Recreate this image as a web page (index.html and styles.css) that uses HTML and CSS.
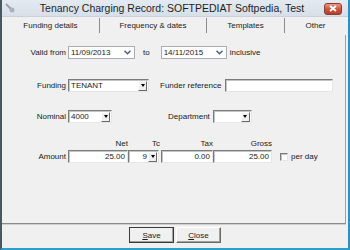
FILE: index.html
```html
<!DOCTYPE html>
<html lang="en">
<head>
    <meta charset="UTF-8">
    <title>Tenancy Charging Record</title>
    <link rel="stylesheet" href="styles.css">
</head>
<body>
    <div class="window">
        <div class="titlebar">
            <span class="app-icon">
                <svg width="10" height="10" viewBox="0 0 10 10"><path d="M1 1 L6 6" stroke="#9aa3ad" stroke-width="2"/><circle cx="7" cy="7" r="2.5" fill="#a9b1ba"/></svg>
            </span>
            <span class="title">Tenancy Charging Record: SOFTPEDIAT Softpedia, Test</span>
            <span class="close-btn">
                <svg width="8" height="7" viewBox="0 0 8 7"><path d="M1 1 L7 6 M7 1 L1 6" stroke="#fff" stroke-width="1.8"/></svg>
            </span>
        </div>

        <div class="tabs">
            <div class="tab active">Funding details</div>
            <div class="tab tab-freq">Frequency &amp; dates</div>
            <div class="tab tab-tpl">Templates</div>
            <div class="tab tab-other">Other</div>
        </div>

        <div class="panel">
            <div class="row row-valid">
                <span class="lbl">Valid from</span>
                <div class="date">
                    <span class="date-text">11/09/2013</span>
                    <svg class="chev" width="7" height="5" viewBox="0 0 7 5"><path d="M0.5 0.8 L3.5 3.8 L6.5 0.8" fill="none" stroke="#4a5f86" stroke-width="1.5"/></svg>
                </div>
                <span class="to">to</span>
                <div class="date date-to">
                    <span class="date-text">14/11/2015</span>
                    <svg class="chev" width="7" height="5" viewBox="0 0 7 5"><path d="M0.5 0.8 L3.5 3.8 L6.5 0.8" fill="none" stroke="#4a5f86" stroke-width="1.5"/></svg>
                </div>
                <span class="inclusive">inclusive</span>
            </div>

            <div class="row row-funding">
                <span class="lbl">Funding</span>
                <div class="combo combo-funding">
                    <span class="combo-text">TENANT</span>
                    <span class="combo-arrow"><i></i></span>
                </div>
                <span class="lbl-inline lbl-funder">Funder reference</span>
                <div class="field field-funder"></div>
            </div>

            <div class="row row-nominal">
                <span class="lbl">Nominal</span>
                <div class="combo combo-nominal">
                    <span class="combo-text">4000</span>
                    <span class="combo-arrow"><i></i></span>
                </div>
                <span class="lbl-inline lbl-dept">Department</span>
                <div class="combo combo-dept">
                    <span class="combo-text"></span>
                    <span class="combo-arrow"><i></i></span>
                </div>
            </div>

            <div class="row row-heads">
                <span class="lbl"></span>
                <span class="head col-net">Net</span>
                <span class="head col-tc">Tc</span>
                <span class="head col-gap"></span>
                <span class="head col-tax">Tax</span>
                <span class="head col-gross">Gross</span>
            </div>

            <div class="row row-amount">
                <span class="lbl">Amount</span>
                <div class="field num col-net">25.00</div>
                <div class="combo col-tc">
                    <span class="combo-text num">9</span>
                    <span class="combo-arrow"><i></i></span>
                </div>
                <span class="col-gap"></span>
                <div class="field num col-tax">0.00</div>
                <div class="field num col-gross">25.00</div>
                <span class="checkbox"></span>
                <span class="per-day">per day</span>
            </div>
        </div>

        <div class="buttons">
            <button class="btn btn-default"><u>S</u>ave</button>
            <button class="btn"><u>C</u>lose</button>
        </div>
    </div>
</body>
</html>
```

FILE: styles.css
```css
body {
    margin: 0;
    font-family: 'Liberation Sans', Arial, sans-serif;
    font-size: 8px;
    color: #1a1a1a;
    background: #f0f0f0;
}

.window {
    width: 350px;
    height: 250px;
    box-sizing: border-box;
    border-left: 2px solid #4c565f;
    border-right: 2px solid #2a93bd;
    border-bottom: 2px solid #2a9fc9;
    background: #f0f0f0;
    display: flex;
    flex-direction: column;
}

/* title bar */
.titlebar {
    height: 17px;
    display: grid;
    grid-template-columns: 18px 1fr 24px;
    align-items: center;
    background: linear-gradient(#e4eaf1, #d7dfe8);
    border-bottom: 1px solid #c9d1da;
    box-sizing: border-box;
}

.app-icon {
    display: flex;
    padding-left: 3px;
}

.title {
    text-align: center;
    font-size: 10.5px;
    color: #1e1e1e;
    white-space: nowrap;
}

.close-btn {
    width: 18px;
    height: 12px;
    margin-top: 1px;
    box-sizing: border-box;
    border: 1px solid #8e3b2f;
    border-radius: 3px;
    background: linear-gradient(#e59a88, #c9513b 55%, #b8402c);
    display: flex;
    align-items: center;
    justify-content: center;
}

/* tabs */
.tabs {
    height: 18px;
    display: flex;
    box-sizing: border-box;
    padding-top: 1px;
}

.tab {
    height: 15px;
    line-height: 15px;
    text-align: center;
    color: #222;
    border-right: 1px solid #8c8c8c;
    box-sizing: border-box;
}

.tab.active {
    width: 98px;
}

.tab-freq {
    width: 107px;
}

.tab-tpl {
    width: 78px;
}

.tab-other {
    width: 61px;
    border-right: none;
}

/* panel */
.panel {
    width: 344px;
    height: 189px;
    box-sizing: border-box;
    border-right: 1px solid #a0a0a0;
    border-bottom: 1px solid #8a8a8a;
    box-shadow: 0 1px 0 #cfcfcf;
}

.row {
    display: flex;
    align-items: center;
    height: 13px;
}

.row-valid {
    margin-top: 11px;
}

.row-funding {
    margin-top: 20px;
}

.row-nominal {
    margin-top: 18px;
}

.row-heads {
    margin-top: 16px;
    height: 9px;
}

.row-amount {
    margin-top: 2px;
}

.lbl {
    width: 64px;
    margin-right: 2px;
    text-align: right;
    flex-shrink: 0;
}

/* date pickers */
.date {
    width: 67px;
    height: 13px;
    box-sizing: border-box;
    border: 1px solid #abadb3;
    background: #fff;
    display: flex;
    align-items: center;
    justify-content: space-between;
    padding: 0 3px 0 2px;
}

.date-to {
    width: 66px;
}

.to {
    margin: 0 11px 0 8px;
}

.inclusive {
    margin-left: 3px;
}

/* classic sunken controls */
.field,
.combo {
    height: 13px;
    box-sizing: border-box;
    background: #fff;
    border: 1px solid;
    border-color: #7b7b7b #e6e6e6 #e6e6e6 #7b7b7b;
    box-shadow: inset 1px 1px 0 #c4c4c4;
}

.combo {
    display: flex;
    align-items: center;
    padding-left: 2px;
}

.combo-text {
    flex: 1;
}

.combo-arrow {
    width: 9px;
    height: 10px;
    margin-right: 1px;
    box-sizing: border-box;
    background: #f0f0f0;
    border: 1px solid;
    border-color: #fff #6a6a6a #6a6a6a #fff;
    display: flex;
    align-items: center;
    justify-content: center;
}

.combo-arrow i {
    width: 0;
    height: 0;
    border-left: 2.5px solid transparent;
    border-right: 2.5px solid transparent;
    border-top: 3px solid #000;
}

.combo-funding {
    width: 81px;
}

.lbl-funder {
    margin-left: 11px;
    margin-right: 4px;
}

.field-funder {
    width: 108px;
}

.combo-nominal {
    width: 44px;
}

.lbl-dept {
    margin-left: 56px;
    margin-right: 3px;
}

.combo-dept {
    width: 39px;
}

/* amount grid */
.head {
    text-align: right;
    flex-shrink: 0;
}

.num {
    text-align: right;
    padding-right: 2px;
    line-height: 11px;
}

.col-net {
    width: 60px;
}

.col-tc {
    width: 31px;
}

.col-tc .combo-text {
    padding-right: 1px;
}

.col-gap {
    width: 2px;
}

.col-tax {
    width: 52px;
}

.col-gross {
    width: 59px;
}

.row-heads .col-tc {
    padding-right: 0;
    width: 32px;
}

.row-heads .col-gap {
    width: 1px;
}

.checkbox {
    width: 8px;
    height: 8px;
    margin-left: 8px;
    box-sizing: border-box;
    background: #fff;
    border: 1px solid;
    border-color: #7b7b7b #e6e6e6 #e6e6e6 #7b7b7b;
    box-shadow: inset 1px 1px 0 #c4c4c4;
}

.per-day {
    margin-left: 3px;
}

/* buttons */
.buttons {
    display: flex;
    justify-content: center;
    gap: 2px;
    margin-top: 3px;
}

.btn {
    width: 45px;
    height: 16px;
    padding: 0;
    font-family: 'Liberation Sans', Arial, sans-serif;
    font-size: 8px;
    color: #1a1a1a;
    background: #f0f0f0;
    border: 1px solid;
    border-color: #fff #6a6a6a #6a6a6a #fff;
    box-shadow: inset -1px -1px 0 #a0a0a0;
}

.btn-default {
    outline: 1px solid #3a3a3a;
    outline-offset: -1px;
    border-color: #fff #6a6a6a #6a6a6a #fff;
}
```
